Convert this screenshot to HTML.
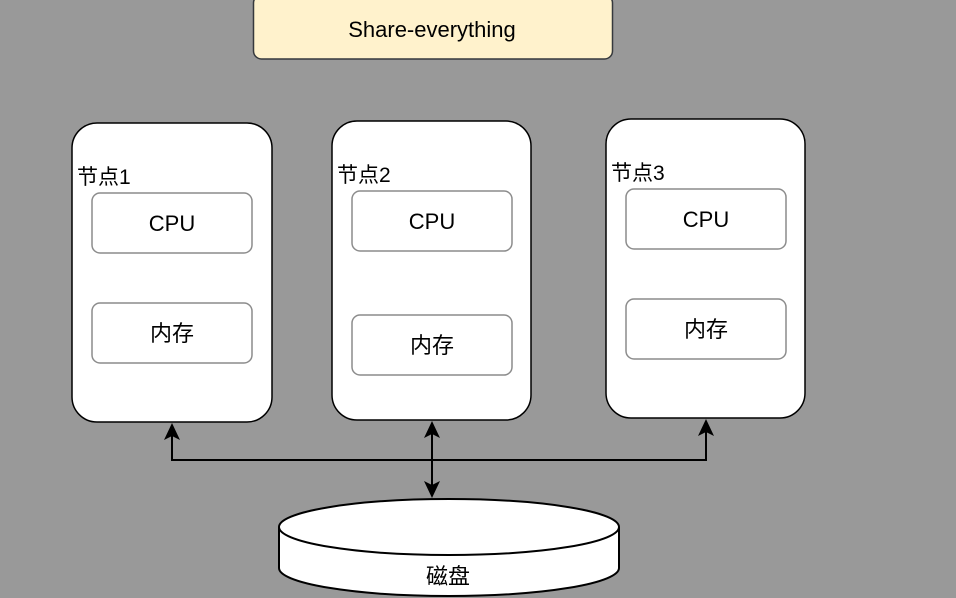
<!DOCTYPE html>
<html><head><meta charset="utf-8"><style>
html,body{margin:0;padding:0;background:#999999;width:956px;height:598px;overflow:hidden}
svg{display:block}
text{font-family:"Liberation Sans","Noto Sans CJK SC",sans-serif;fill:#000}
</style></head><body>
<svg width="956" height="598" viewBox="0 0 956 598" xmlns="http://www.w3.org/2000/svg">
<rect x="0" y="0" width="956" height="598" fill="#999999"/>
<rect x="253.5" y="-5" width="359" height="64" rx="8" fill="#fff2cc" stroke="#36393d" stroke-width="1.5"/>
<text x="432" y="37" font-size="22" text-anchor="middle">Share-everything</text>

<g stroke="#000" stroke-width="1.5" fill="#fff">
<rect x="72" y="123" width="200" height="299" rx="25"/>
<rect x="332" y="121" width="199" height="299" rx="25"/>
<rect x="606" y="119" width="199" height="299" rx="25"/>
</g>
<g stroke="#8c8c8c" stroke-width="1.5" fill="#fff">
<rect x="92" y="193" width="160" height="60" rx="8"/>
<rect x="92" y="303" width="160" height="60" rx="8"/>
<rect x="352" y="191" width="160" height="60" rx="8"/>
<rect x="352" y="315" width="160" height="60" rx="8"/>
<rect x="626" y="189" width="160" height="60" rx="8"/>
<rect x="626" y="299" width="160" height="60" rx="8"/>
</g>
<g font-size="21">
<text x="77" y="184">节点1</text>
<text x="337" y="182">节点2</text>
<text x="611" y="180">节点3</text>
</g>
<g font-size="22" text-anchor="middle">
<text x="172" y="231">CPU</text>
<text x="172" y="341">内存</text>
<text x="432" y="229">CPU</text>
<text x="432" y="353">内存</text>
<text x="706" y="227">CPU</text>
<text x="706" y="337">内存</text>
</g>

<g stroke="#000" stroke-width="2" fill="none">
<polyline points="172,434 172,460 706,460 706,430"/>
<line x1="432" y1="432" x2="432" y2="487"/>
</g>
<g fill="#000">
<path d="M172,423 L180,440 L172,436 L164,440 Z"/>
<path d="M706,419 L714,436 L706,432 L698,436 Z"/>
<path d="M432,421 L440,438 L432,434 L424,438 Z"/>
<path d="M432,498 L440,481 L432,485 L424,481 Z"/>
</g>

<g stroke="#000" stroke-width="2" fill="#fff">
<path d="M279,527 L279,568 A170,28 0 0 0 619,568 L619,527"/>
<ellipse cx="449" cy="527" rx="170" ry="28"/>
</g>
<text x="448" y="584" font-size="22" text-anchor="middle">磁盘</text>
</svg>
</body></html>
